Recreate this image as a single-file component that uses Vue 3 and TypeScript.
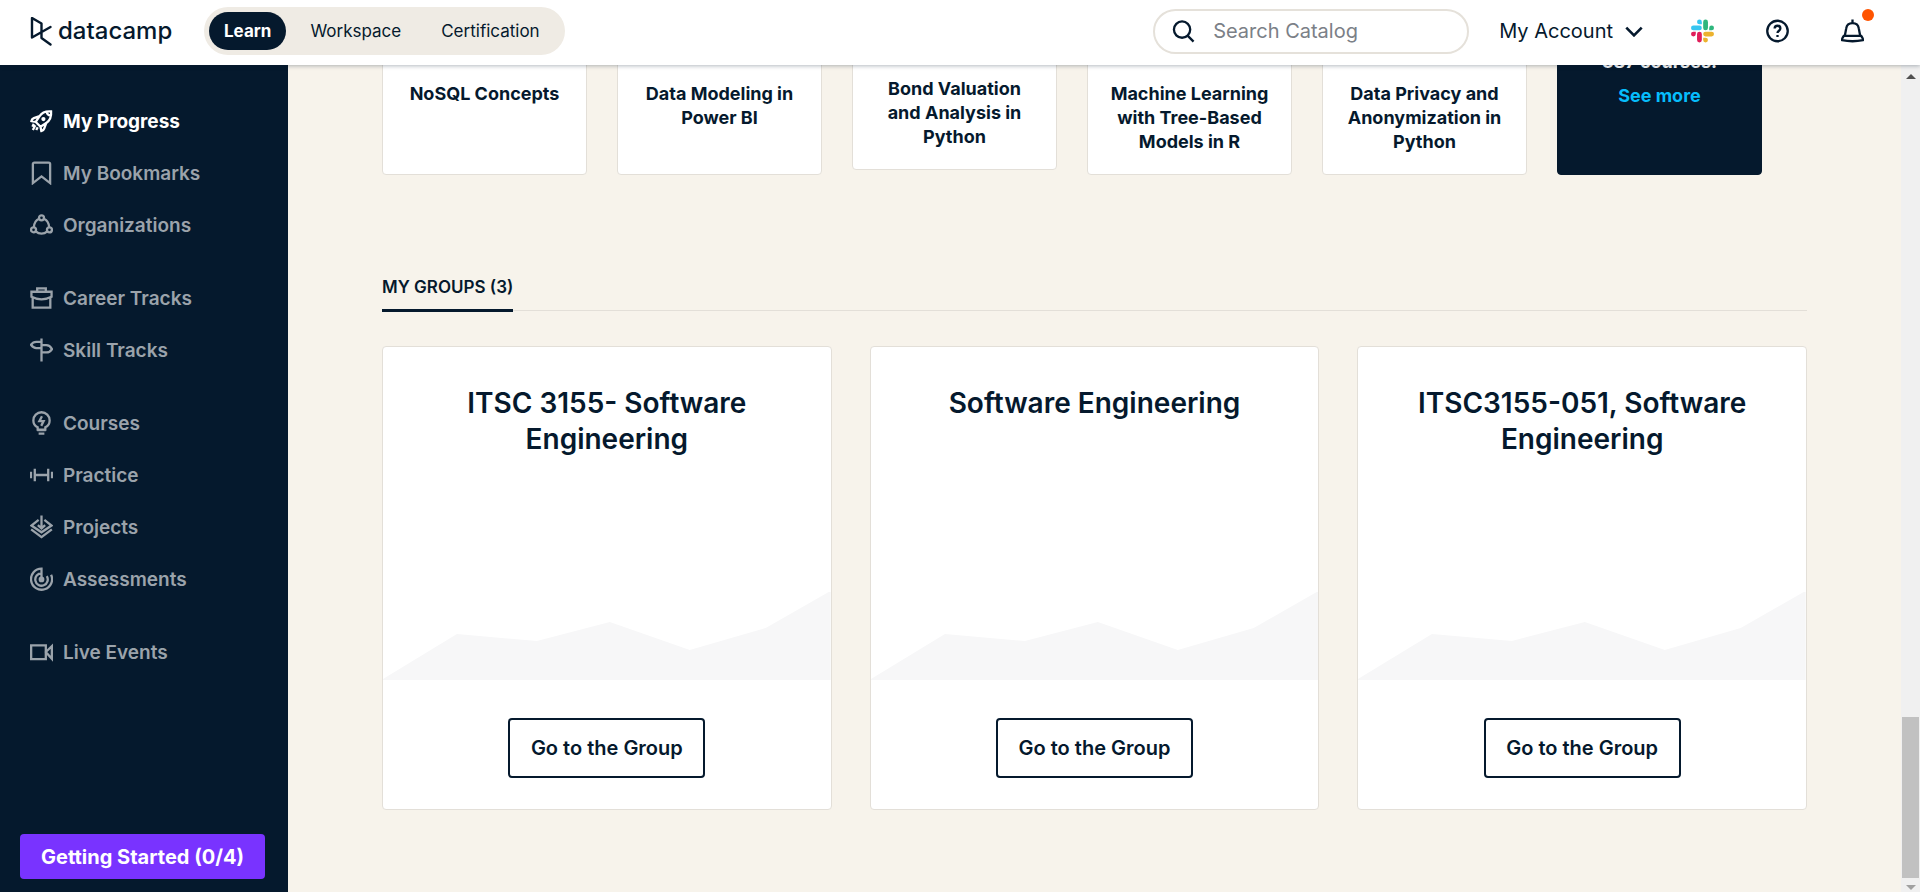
<script setup lang="ts">
import { ref } from 'vue'

interface NavItem {
  label: string
  icon: string
  active?: boolean
}

interface Course {
  title: string
  raised?: boolean
}

const sections = ['Learn', 'Workspace', 'Certification']

const navGroups: NavItem[][] = [
  [
    { label: 'My Progress', icon: 'rocket', active: true },
    { label: 'My Bookmarks', icon: 'bookmark' },
    { label: 'Organizations', icon: 'organization' },
  ],
  [
    { label: 'Career Tracks', icon: 'briefcase' },
    { label: 'Skill Tracks', icon: 'signpost' },
  ],
  [
    { label: 'Courses', icon: 'bulb' },
    { label: 'Practice', icon: 'dumbbell' },
    { label: 'Projects', icon: 'layers' },
    { label: 'Assessments', icon: 'radar' },
  ],
  [{ label: 'Live Events', icon: 'camera' }],
]

const icons: Record<string, string> = {
  rocket:
    '<path d="M22 2c-6-.5-9.500 1-12 5L4 9c-1.500.6-2.300 1.700-2.500 3l4.500 1 5 5 .8 4.500c1.500-.2 2.500-1 3-2.500l2.200-6c4-2.500 5.500-6 5-12zM17.500 2.500c.3 2.500 1.500 3.700 4 4M4 15l-1.500 3M5.500 16.500 3 21.500M8 18.500l-1.500 3M10 7l-4 6M17 14l-6 4"/><circle cx="14" cy="10" r="1" fill="currentColor"/>',
  bookmark: '<path d="M4.500 1.200h15a1.500 1.500 0 0 1 1.500 1.500V22.500l-9-7-9 7V2.700a1.500 1.500 0 0 1 1.500-1.500z"/>',
  organization:
    '<circle cx="12" cy="4.500" r="2.600"/><circle cx="3.700" cy="17" r="2.600"/><circle cx="20.300" cy="17" r="2.600"/><path d="M9.400 5.500C6 7 4.300 10 4 14.400M14.600 5.500C18 7 19.700 10 20 14.400M6 18.700c3.500 3.200 8.500 3.200 12 0"/>',
  briefcase:
    '<path d="M1.500 5.500h21v5.200c-6.500 3.400-14.500 3.400-21 0zM2.800 11.500V22h18.400V11.500M7.500 5.500V2h9v3.500"/>',
  signpost:
    '<path d="M12 0v24M12 3.500H6.500C4.500 3.500 2.500 4.500 1 6.500c1.500 2 3.500 3.500 5.500 3.500H12M12 7h5c2.500 0 4.500 1.500 6 4-1.500 2.300-3.500 3.500-6 3.500h-5"/>',
  bulb:
    '<path d="M8 19v-2.500C5 15 3.500 12.500 3.500 9.300a8.500 8.500 0 0 1 17 0c0 3.200-1.500 5.700-4.500 7.200V19zM7.500 19.500h9M9 23h6"/><path d="M12.500 5 9.800 10h4.400l-2.500 5"/>',
  dumbbell: '<path d="M5 5.500v13M19 5.500v13M5 12h14M1 8.500v7M23 8.500v7"/>',
  layers:
    '<path d="M9 4.500 1.500 10.500 12 17.500l10.500-7L15 4.500M12 0v13M8.200 10l3.800 3.500 3.800-3.500M1.200 14.500 12 22.500l10.800-8"/>',
  radar:
    '<path d="M12 12.500V1.200A11 11 0 1 0 22 7.500M12 6A6.500 6.500 0 1 0 17.500 9"/><circle cx="12" cy="12.500" r="1.800" fill="currentColor"/>',
  camera: '<path d="M1.200 5h15.300v14.500H1.200zM16.500 12l6.300-6v13z"/>',
}

const courses: Course[] = [
  { title: 'NoSQL Concepts' },
  { title: 'Data Modeling in Power BI' },
  { title: 'Bond Valuation and Analysis in Python', raised: true },
  { title: 'Machine Learning with Tree-Based Models in R' },
  { title: 'Data Privacy and Anonymization in Python' },
]

const groups = ['ITSC 3155- Software Engineering', 'Software Engineering', 'ITSC3155-051, Software Engineering']

const query = ref('')
</script>

<template>
  <div class="page">
    <header class="topbar">
      <a class="brand" href="#" aria-label="datacamp">
        <svg class="brand-mark" viewBox="0 0 22 29" aria-hidden="true">
          <path d="M11.500 13.500V6.500L2 1v19.500L20.500 10M11.500 13.500v7.500L20.500 27.500" />
        </svg>
        <span>datacamp</span>
      </a>
      <nav class="switcher" aria-label="Sections">
        <a v-for="(s, i) in sections" :key="s" href="#" :class="{ current: i === 0 }">{{ s }}</a>
      </nav>
      <label class="search">
        <svg viewBox="0 0 24 24" aria-hidden="true"><circle cx="10.500" cy="10" r="8.500" /><path d="m16.500 16.500 6 6" /></svg>
        <input v-model="query" type="search" placeholder="Search Catalog" aria-label="Search Catalog" />
      </label>
      <button class="account" type="button">
        My Account
        <svg viewBox="0 0 16 10" aria-hidden="true"><path d="m1 1.500 7 7 7-7" /></svg>
      </button>
      <div class="tools">
        <button type="button" aria-label="Slack">
          <svg class="slack" viewBox="0 0 24 24">
            <path fill="#e01e5a" d="M5 15.200a2.500 2.500 0 1 1-2.500-2.500H5zM6.300 15.200a2.500 2.500 0 0 1 5 0v6.300a2.500 2.500 0 0 1-5 0z" />
            <path fill="#36c5f0" d="M8.800 5a2.500 2.500 0 1 1 2.500-2.500V5zM8.800 6.300a2.500 2.500 0 0 1 0 5H2.500a2.500 2.500 0 0 1 0-5z" />
            <path fill="#2eb67d" d="M19 8.800a2.500 2.500 0 1 1 2.500 2.500H19zM17.700 8.800a2.500 2.500 0 0 1-5 0V2.500a2.500 2.500 0 0 1 5 0z" />
            <path fill="#ecb22e" d="M15.200 19a2.500 2.500 0 1 1-2.500 2.500V19zM15.200 17.700a2.500 2.500 0 0 1 0-5h6.300a2.500 2.500 0 0 1 0 5z" />
          </svg>
        </button>
        <button type="button" aria-label="Help">
          <svg viewBox="0 0 24 24">
            <circle cx="12" cy="12" r="10.700" />
            <path d="M9 9.500c0-4 6-4 6 0 0 2.200-3 2.200-3 4.500M12 16.200v2" />
          </svg>
        </button>
        <button class="bell" type="button" aria-label="Notifications">
          <svg viewBox="0 0 24 24">
            <path d="M12 0v3.500M4 17 5.500 9c1-7 12-7 13 0L20 17M3 17h18c1.500 2 2 3 2 4.500-7 1.500-15 1.500-22 0 0-1.500.5-2.500 2-4.500z" />
          </svg>
          <span class="dot"></span>
        </button>
      </div>
    </header>

    <div class="body">
      <aside class="sidebar">
        <nav aria-label="Main">
          <ul v-for="(group, g) in navGroups" :key="g">
            <li v-for="item in group" :key="item.label">
              <a href="#" :class="{ active: item.active }">
                <svg viewBox="0 0 24 24" aria-hidden="true" v-html="icons[item.icon]"></svg>
                {{ item.label }}
              </a>
            </li>
          </ul>
        </nav>
        <button class="getting-started" type="button">Getting Started (0/4)</button>
      </aside>

      <main class="content">
        <section class="courses" aria-label="Courses">
          <article v-for="c in courses" :key="c.title" class="course" :class="{ raised: c.raised }">
            <h3>{{ c.title }}</h3>
          </article>
          <article class="course more">
            <p>387 courses!</p>
            <a href="#">See more</a>
          </article>
        </section>

        <div class="tabs">
          <h2>MY GROUPS (3)</h2>
        </div>

        <section class="groups" aria-label="My groups">
          <article v-for="name in groups" :key="name" class="group">
            <h3>{{ name }}</h3>
            <svg viewBox="0 0 448 88" preserveAspectRatio="none" aria-hidden="true">
              <path d="M0 87 74 42l80 7 73-19 80 28 76-22L446 0h2v88H0z" />
            </svg>
            <div class="group-foot">
              <a href="#">Go to the Group</a>
            </div>
          </article>
        </section>
      </main>

      <div class="scrollbar" aria-hidden="true">
        <span class="arrow up"></span>
        <span class="thumb"></span>
        <span class="arrow down"></span>
      </div>
    </div>
  </div>
</template>

<style>
body {
  margin: 0;
}
</style>

<style scoped>
.page {
  display: flex;
  flex-direction: column;
  height: 100vh;
  color: #05192d;
  background: #f7f3eb;
  font-family: Inter, "Liberation Sans", sans-serif;
  overflow: hidden;
}

a {
  color: inherit;
  text-decoration: none;
}

button {
  border: 0;
  background: none;
  color: inherit;
  font: inherit;
  padding: 0;
}

h2,
h3,
p,
ul {
  margin: 0;
  padding: 0;
}

svg {
  display: block;
  flex: none;
  fill: none;
  stroke: currentColor;
  stroke-width: 2.4;
}

.topbar {
  position: relative;
  z-index: 1;
  flex: none;
  display: flex;
  align-items: center;
  box-sizing: border-box;
  height: 65px;
  padding: 0 56px 3px 30px;
  background: #fff;
  box-shadow: 0 1px 4px rgba(5, 25, 45, 0.3);
}

.brand {
  display: flex;
  align-items: center;
  gap: 6px;
  width: 174px;
  font-size: 24px;
  font-weight: 500;
  line-height: 32px;
}

.brand-mark {
  width: 22px;
  height: 29px;
  stroke-linejoin: round;
  stroke-linecap: round;
}

.switcher {
  display: flex;
  padding: 5px;
  border-radius: 24px;
  background: #efebe4;
  font-size: 17px;
  line-height: 38px;
}

.switcher a {
  padding: 0 20px;
}

.switcher .current {
  padding: 0 15px;
  margin-right: 4px;
  border-radius: 19px;
  background: #05192d;
  color: #fff;
  font-weight: 700;
}

.search {
  display: flex;
  align-items: center;
  gap: 18px;
  box-sizing: border-box;
  width: 316px;
  height: 45px;
  margin-left: auto;
  padding: 0 17px;
  border: 2px solid #e5e1da;
  border-radius: 23px;
}

.search svg {
  width: 23px;
  height: 23px;
}

.search input {
  flex: 1;
  min-width: 0;
  padding: 0;
  border: 0;
  outline: 0;
  background: none;
  color: #05192d;
  font: 20px Inter, "Liberation Sans", sans-serif;
}

.search input::placeholder {
  color: #7b8087;
  opacity: 1;
}

.account {
  display: flex;
  align-items: center;
  gap: 12px;
  margin-left: 30px;
  font-size: 20px;
}

.account svg {
  width: 18px;
  height: 11px;
}

.tools {
  display: flex;
  gap: 52px;
  margin-left: 48px;
}

.tools svg {
  width: 23px;
  height: 24px;
}

.tools .slack {
  stroke: none;
}

.bell {
  position: relative;
}

.dot {
  position: absolute;
  top: -10px;
  right: -10px;
  width: 12px;
  height: 12px;
  border-radius: 50%;
  background: #ff5400;
}

.body {
  flex: 1;
  display: flex;
  min-height: 0;
}

.sidebar {
  flex: none;
  display: flex;
  flex-direction: column;
  justify-content: space-between;
  box-sizing: border-box;
  width: 288px;
  padding: 30px 20px 13px;
  background: #05192d;
  color: #9ba3ab;
}

.sidebar ul {
  margin-bottom: 21px;
  padding-left: 10px;
  list-style: none;
}

.sidebar a {
  display: flex;
  align-items: center;
  gap: 10px;
  height: 52px;
  font-size: 19px;
  font-weight: 600;
}

.sidebar a.active {
  color: #fff;
  font-weight: 700;
}

.sidebar svg {
  width: 23px;
  height: 24px;
}

.getting-started {
  align-self: flex-start;
  width: 245px;
  height: 45px;
  border-radius: 4px;
  background: #7933ff;
  color: #fff;
  font-size: 20px;
  font-weight: 700;
}

.content {
  flex: 1;
  display: flex;
  flex-direction: column;
  justify-content: flex-end;
  min-width: 0;
  padding: 0 94px 82px;
  overflow: hidden;
}

.courses {
  display: grid;
  grid-template-columns: repeat(6, 1fr);
  gap: 30px;
  margin-right: 45px;
}

.course {
  box-sizing: border-box;
  height: 240px;
  padding: 146px 18px 0;
  border: 1px solid #e3dfd8;
  border-radius: 4px;
  background: #fff;
  text-align: center;
}

.course.raised {
  height: 235px;
  padding-top: 141px;
}

.course h3 {
  font-size: 18px;
  font-weight: 700;
  line-height: 24px;
}

.course.more {
  padding-top: 114px;
  border-color: #05192d;
  background: #05192d;
  color: #fff;
  font-size: 18px;
  font-weight: 700;
  line-height: 24px;
}

.course.more a {
  display: block;
  margin-top: 10px;
  color: #06bdfc;
}

.tabs {
  display: flex;
  margin: 100px 0 35px;
  border-bottom: 1px solid #e3dfd8;
}

.tabs h2 {
  margin-bottom: -2px;
  padding-bottom: 10px;
  border-bottom: 3px solid #05192d;
  font-size: 17px;
  font-weight: 600;
  line-height: 24px;
}

.groups {
  display: grid;
  grid-template-columns: repeat(3, 1fr);
  gap: 38px;
}

.group {
  display: flex;
  flex-direction: column;
  border: 1px solid #e3dfd8;
  border-radius: 4px;
  background: #fff;
  text-align: center;
}

.group h3 {
  min-height: 207px;
  padding: 38px 50px 0;
  font-size: 28px;
  font-weight: 600;
  line-height: 36px;
}

.group svg {
  width: 100%;
  height: 88px;
  fill: #f7f7f8;
  stroke: none;
}

.group-foot {
  display: flex;
  justify-content: center;
  padding: 38px 0 31px;
}

.group-foot a {
  box-sizing: border-box;
  width: 197px;
  border: 2px solid #05192d;
  border-radius: 4px;
  font-size: 20px;
  font-weight: 600;
  line-height: 56px;
}

.scrollbar {
  flex: none;
  display: flex;
  flex-direction: column;
  align-items: center;
  box-sizing: border-box;
  width: 19px;
  padding: 9px 1px 2px;
  background: #f0f0f0;
}

.thumb {
  width: 17px;
  height: 161px;
  margin: auto 0 7px;
  background: #c1c1c1;
}

.arrow {
  border: 5px solid transparent;
}

.arrow.up {
  border-top: 0;
  border-bottom-color: #505050;
}

.arrow.down {
  border-bottom: 0;
  border-top-color: #a0a0a0;
}
</style>
